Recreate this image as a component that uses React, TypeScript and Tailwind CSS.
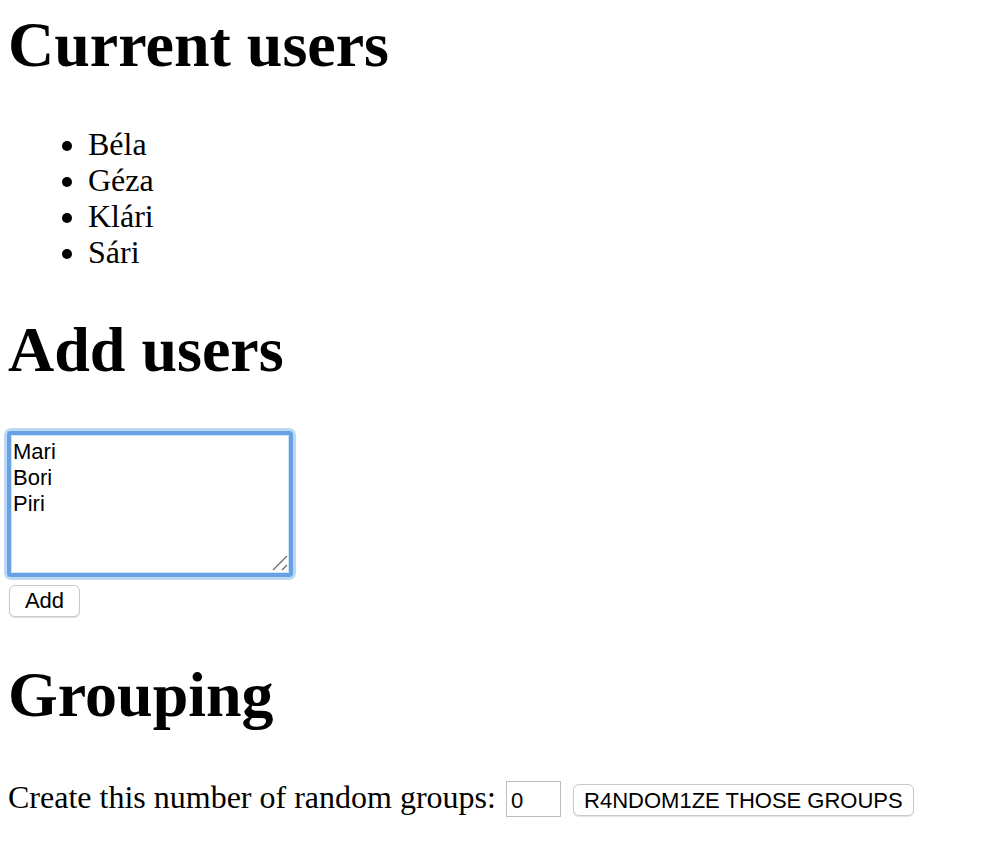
import React from "react";

const serif = "font-['Liberation_Serif','Times_New_Roman',serif]";
const sans = "font-['Liberation_Sans',Arial,sans-serif]";

export default function App() {
  return (
    <div className={`min-h-[860px] bg-white text-black pl-[8px] pt-[8px] ${serif}`}>
      <h1 className="text-[64px] leading-[74px] font-bold">Current users</h1>
      <ul className="mt-[44px] list-disc pl-[80px] text-[32px] leading-[36px]">
        <li>Béla</li>
        <li>Géza</li>
        <li>Klári</li>
        <li>Sári</li>
      </ul>
      <h1 className="mt-[43px] text-[64px] leading-[74px] font-bold">Add users</h1>
      <div className="relative mt-[44px] -ml-[1px] w-[286px] h-[146px]">
        <textarea
          defaultValue={"Mari\nBori\nPiri"}
          className={`block w-full h-full resize-none rounded-[4px] border-[4px] border-[#67a3e4] bg-white pl-[2px] pt-[4px] text-[22px] leading-[26px] text-black outline-none shadow-[0_0_0_3px_#bcd8f6,inset_0_0_0_1px_#cfe3f9] ${sans}`}
        />
        <svg
          className="absolute right-[5px] bottom-[6px]"
          width="16"
          height="16"
          viewBox="0 0 16 16"
        >
          <line x1="1" y1="15" x2="15" y2="1" stroke="#6b6b6b" strokeWidth="1.3" />
          <line x1="10" y1="15" x2="15" y2="10" stroke="#6b6b6b" strokeWidth="1.3" />
        </svg>
      </div>
      <button
        className={`mt-[8px] ml-[1px] block w-[71px] h-[32px] rounded-[6px] border border-[#c9c9c9] bg-white text-[22px] leading-[26px] text-black shadow-[0_1px_1px_rgba(0,0,0,0.12)] ${sans}`}
      >
        Add
      </button>
      <h1 className="mt-[41px] text-[64px] leading-[74px] font-bold">Grouping</h1>
      <div className="mt-[47px] flex items-baseline text-[32px] leading-[36px]">
        <span>Create this number of random groups:</span>
        <input
          defaultValue="0"
          className={`ml-[10px] w-[55px] h-[36px] border border-[#bdbdbd] bg-white pl-[4px] pt-[6px] pb-[2px] text-[22px] leading-[26px] text-black outline-none ${sans}`}
        />
        <button
          className={`ml-[12px] w-[341px] h-[32px] pt-[2px] rounded-[6px] border border-[#c9c9c9] bg-white text-[22px] leading-[26px] text-black shadow-[0_1px_1px_rgba(0,0,0,0.12)] ${sans}`}
        >
          R4NDOM1ZE THOSE GROUPS
        </button>
      </div>
    </div>
  );
}
